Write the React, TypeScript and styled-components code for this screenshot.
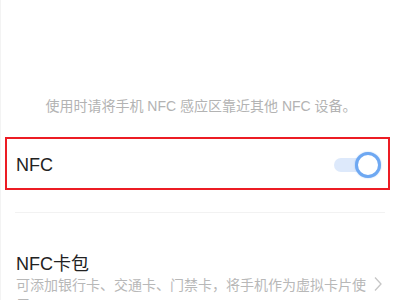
import React from 'react'
import styled, { createGlobalStyle } from 'styled-components'

const GlobalStyle = createGlobalStyle`
    html, body {
        margin: 0;
        padding: 0;
        background: #ffffff;
        overflow: hidden;
    }
    body {
        font-family: 'Liberation Sans', 'Noto Sans CJK SC', sans-serif;
    }
`

const Page = styled.div`
    width: 400px;
    height: 300px;
    display: flex;
    flex-direction: column;
    background: #ffffff;
    border-left: 1px solid #f3f3f3;
    box-sizing: border-box;
    overflow: hidden;

    & > * {
        flex: none;
    }
`

const Hint = styled.p`
    margin: 98px 0 0;
    font-size: 14px;
    line-height: 16px;
    color: #b3b3b3;
    text-align: center;
    padding-left: 1px;
`

const SwitchRow = styled.div`
    margin: 23px 10px 0 4px;
    height: 53px;
    box-sizing: border-box;
    border: 2px solid #ec1c24;
    display: flex;
    align-items: center;
    justify-content: space-between;
    padding: 3px 7px 0 9px;
`

const RowTitle = styled.span`
    font-size: 18px;
    line-height: 22px;
    color: #222222;
`

const Toggle = styled.span<{ on?: boolean }>`
    position: relative;
    width: 47px;
    height: 26px;
    display: flex;
    align-items: center;
`

const Track = styled.span`
    width: 36px;
    height: 14px;
    border-radius: 7px;
    background: #dde9fb;
`

const Knob = styled.span`
    position: absolute;
    right: 0;
    top: 0;
    width: 26px;
    height: 26px;
    box-sizing: border-box;
    border-radius: 50%;
    background: #ffffff;
    border: 3px solid #6ea8f2;
    box-shadow: 0 0 1.5px rgba(90, 150, 235, 0.6);
`

const Divider = styled.div`
    margin: 22px 15px 0 14px;
    height: 1px;
    background: #f2f2f2;
`

const CardRow = styled.div`
    display: flex;
    align-items: flex-start;
    justify-content: space-between;
    padding: 40px 18px 0 15px;
`

const CardText = styled.div`
    width: 351px;
    display: flex;
    flex-direction: column;
`

const CardDesc = styled.span`
    font-size: 14px;
    line-height: 20px;
    color: #b8b8b8;
`

const Chevron = styled.svg`
    flex: none;
    margin-top: 23px;
`

export default function App() {
    return (
        <>
            <GlobalStyle />
            <Page>
                <Hint>使用时请将手机 NFC 感应区靠近其他 NFC 设备。</Hint>
                <SwitchRow>
                    <RowTitle>NFC</RowTitle>
                    <Toggle on>
                        <Track />
                        <Knob />
                    </Toggle>
                </SwitchRow>
                <Divider />
                <CardRow>
                    <CardText>
                        <RowTitle>NFC卡包</RowTitle>
                        <CardDesc>可添加银行卡、交通卡、门禁卡，将手机作为虚拟卡片使用</CardDesc>
                    </CardText>
                    <Chevron width="8" height="16" viewBox="0 0 8 16">
                        <path d="M1 1.5 L7 8 L1 14.5" fill="none" stroke="#c6c6c6" strokeWidth="1.3" />
                    </Chevron>
                </CardRow>
            </Page>
        </>
    )
}
